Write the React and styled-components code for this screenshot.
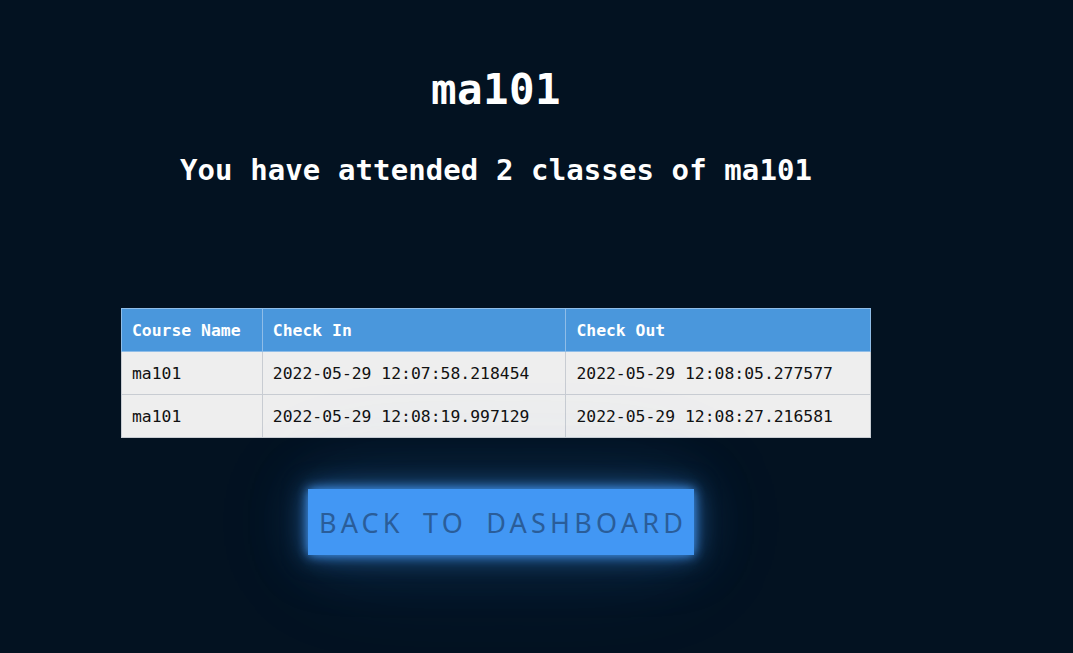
import React from 'react';
import styled, { createGlobalStyle } from 'styled-components';

const GlobalStyle = createGlobalStyle`
    html, body {
        margin: 0;
        padding: 0;
        background: #031221;
        min-height: 100%;
    }
    body {
        font-family: "DejaVu Sans Mono", "Liberation Mono", monospace;
        color: #ffffff;
    }
`;

const Page = styled.div`
    width: 992px;
    min-height: 653px;
    box-sizing: border-box;
    padding-top: 62px;
    display: flex;
    flex-direction: column;
    align-items: center;
`;

const Title = styled.h1`
    margin: 0;
    font-size: 42.5px;
    font-weight: bold;
    line-height: 56px;
    letter-spacing: 0.4px;
`;

const Subtitle = styled.h2`
    margin: 32px 0 0;
    font-size: 29px;
    font-weight: bold;
    line-height: 40px;
    letter-spacing: 0.1px;
`;

const AttendanceTable = styled.table`
    margin-top: 118px;
    width: 750px;
    border-collapse: collapse;
    font-size: 16.4px;
    color: #111;
    text-align: left;

    th, td {
        height: 43px;
        padding: 0 10px;
        border: 1px solid #c8ccd2;
        box-sizing: border-box;
    }

    th {
        background: #4a97dc;
        color: #ffffff;
        font-weight: bold;
        border-color: #8fbde8;
    }

    td {
        background: #eeeeee;
    }
`;

const Col = styled.col`
    width: ${props => props.width}px;
`;

const BackButton = styled.button`
    margin-top: 51px;
    margin-left: 10px;
    width: 386px;
    height: 66px;
    padding: 0 0 0 4px;
    border: none;
    background: #4297f4;
    color: #2a5d99;
    font-family: "Noto Sans", "Open Sans", sans-serif;
    font-size: 27px;
    letter-spacing: 4.2px;
    word-spacing: 8px;
    text-transform: uppercase;
    cursor: pointer;
    box-shadow:
        0 0 10px #4297f4,
        0 0 24px rgba(66, 151, 244, 0.6),
        0 0 60px rgba(66, 151, 244, 0.25),
        0 0 120px rgba(66, 151, 244, 0.12);
`;

const rows = [
    { id: 1, course: 'ma101', checkIn: '2022-05-29 12:07:58.218454', checkOut: '2022-05-29 12:08:05.277577' },
    { id: 2, course: 'ma101', checkIn: '2022-05-29 12:08:19.997129', checkOut: '2022-05-29 12:08:27.216581' },
];

const App = () => {
    return (
        <>
            <GlobalStyle />
            <Page>
                <Title>ma101</Title>
                <Subtitle>You have attended 2 classes of ma101</Subtitle>
                <AttendanceTable>
                    <colgroup>
                        <Col width={141} />
                        <Col width={304} />
                        <Col width={305} />
                    </colgroup>
                    <thead>
                        <tr>
                            <th>Course Name</th>
                            <th>Check In</th>
                            <th>Check Out</th>
                        </tr>
                    </thead>
                    <tbody>
                        {rows.map(row => (
                            <tr key={row.id}>
                                <td>{row.course}</td>
                                <td>{row.checkIn}</td>
                                <td>{row.checkOut}</td>
                            </tr>
                        ))}
                    </tbody>
                </AttendanceTable>
                <BackButton>Back to dashboard</BackButton>
            </Page>
        </>
    );
};

export default App;
